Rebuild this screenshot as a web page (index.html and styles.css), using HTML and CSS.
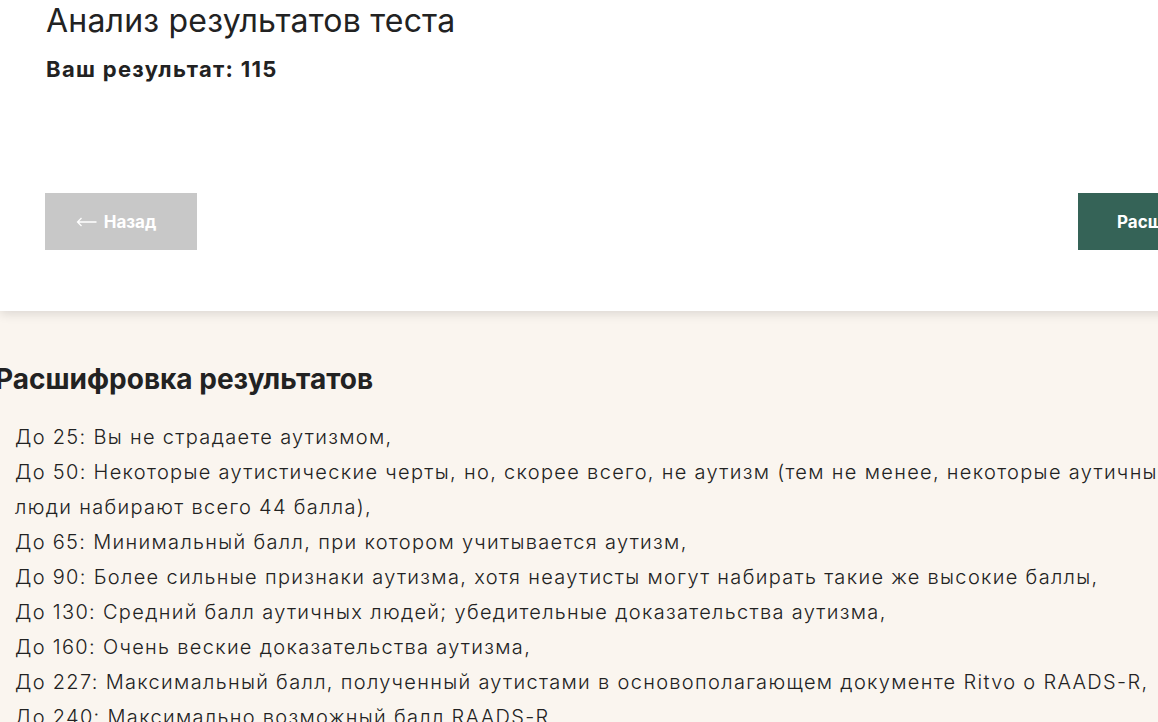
FILE: index.html
```html
<!DOCTYPE html>
<html lang="ru">
<head>
    <meta charset="UTF-8">
    <meta name="viewport" content="width=device-width, initial-scale=1.0">
    <title>Анализ результатов теста</title>
    <link rel="stylesheet" href="styles.css">
</head>
<body>
    <section class="result-card">
        <h1 class="result-title">Анализ результатов теста</h1>
        <div class="result-score">Ваш результат: 115</div>

        <div class="result-nav">
            <a href="#" class="btn btn-back">
                <svg class="btn-arrow" width="21" height="10" viewBox="0 0 21 10">
                    <path d="M20.5 5H1.5M5.5 1L1.5 5L5.5 9" fill="none" stroke="#ffffff" stroke-width="1.3"/>
                </svg>
                Назад
            </a>
            <a href="#" class="btn btn-next">Расшифровка</a>
        </div>
    </section>

    <section class="decode">
        <h2 class="decode-title">Расшифровка результатов</h2>
        <p class="decode-text">
            До 25: Вы не страдаете аутизмом,<br>
            До 50: Некоторые аутистические черты, но, скорее всего, не аутизм (тем не менее, некоторые аутичные люди набирают всего 44 балла),<br>
            До 65: Минимальный балл, при котором учитывается аутизм,<br>
            До 90: Более сильные признаки аутизма, хотя неаутисты могут набирать такие же высокие баллы,<br>
            До 130: Средний балл аутичных людей; убедительные доказательства аутизма,<br>
            До 160: Очень веские доказательства аутизма,<br>
            До 227: Максимальный балл, полученный аутистами в основополагающем документе Ritvo о RAADS-R,<br>
            До 240: Максимально возможный балл RAADS-R
        </p>
    </section>
</body>
</html>
```

FILE: styles.css
```css
body {
    margin: 0;
    padding: 0;
    font-family: Inter, 'Noto Sans', sans-serif;
    color: #222222;
    background: #faf5ef;
    overflow: hidden;
}

.result-card {
    position: relative;
    z-index: 2;
    background: #ffffff;
    width: 1360px;
    padding: 0 0 61px 45px;
    box-sizing: border-box;
    box-shadow: 0 3px 10px rgba(0, 0, 0, 0.12);
}

.result-title {
    margin: 0 0 0 1px;
    font-size: 32px;
    font-weight: 400;
    line-height: 42px;
    letter-spacing: 0.2px;
    color: #222222;
}

.result-score {
    margin: 12px 0 0 1px;
    font-size: 22px;
    font-weight: 700;
    line-height: 30px;
    letter-spacing: 0.06em;
}

.result-nav {
    display: flex;
    justify-content: flex-start;
    gap: 881px;
    margin-top: 109px;
}

.btn {
    display: inline-flex;
    align-items: center;
    justify-content: center;
    gap: 7px;
    height: 57px;
    font-size: 17px;
    font-weight: 700;
    color: #ffffff;
    text-decoration: none;
}

.btn-back {
    width: 152px;
    box-sizing: border-box;
    padding-right: 10px;
    background: #c8c8c8;
}

.btn-arrow {
    margin-top: 1px;
}

.btn-next {
    padding: 0 39px;
    background: #356357;
}

.decode {
    padding: 48px 0 40px 15px;
}

.decode-title {
    margin: 0 0 0 -20px;
    font-size: 28px;
    font-weight: 700;
    line-height: 40px;
}

.decode-text {
    margin: 21px 0 0;
    width: 1190px;
    font-size: 20px;
    font-weight: 300;
    line-height: 35px;
    letter-spacing: 0.066em;
}
```
